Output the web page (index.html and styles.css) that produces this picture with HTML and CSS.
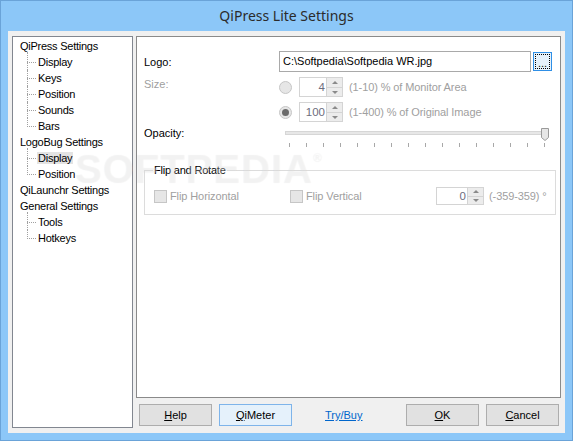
FILE: index.html
```html
<!DOCTYPE html>
<html>
<head>
<meta charset="utf-8">
<link rel="stylesheet" href="styles.css">
</head>
<body>
<div class="window">
  <div class="titlebar">QiPress Lite Settings</div>
  <div class="client">
    <div class="tree">
      <div class="node">QiPress Settings</div>
      <div class="children">
        <div class="child first"><span>Display</span></div>
        <div class="child"><span>Keys</span></div>
        <div class="child"><span>Position</span></div>
        <div class="child"><span>Sounds</span></div>
        <div class="child last"><span>Bars</span></div>
      </div>
      <div class="node">LogoBug Settings</div>
      <div class="children">
        <div class="child first sel"><span>Display</span></div>
        <div class="child last"><span>Position</span></div>
      </div>
      <div class="node">QiLaunchr Settings</div>
      <div class="node">General Settings</div>
      <div class="children">
        <div class="child first"><span>Tools</span></div>
        <div class="child last"><span>Hotkeys</span></div>
      </div>
    </div>
    <div class="right">
      <div class="panel">
        <div class="row row-logo">
          <div class="label">Logo:</div>
          <div class="field">
            <div class="textbox">C:\Softpedia\Softpedia WR.jpg</div>
            <div class="browse"><span class="focus">...</span></div>
          </div>
        </div>
        <div class="row row-size">
          <div class="label disabled">Size:</div>
          <div class="field">
            <span class="radio"></span>
            <div class="spin">
              <div class="spin-val">4</div>
              <div class="spin-btns"><span class="up"></span><span class="down"></span></div>
            </div>
            <span class="hint">(1-10) % of Monitor Area</span>
          </div>
        </div>
        <div class="row row-size">
          <div class="label"></div>
          <div class="field">
            <span class="radio checked"></span>
            <div class="spin">
              <div class="spin-val">100</div>
              <div class="spin-btns"><span class="up"></span><span class="down"></span></div>
            </div>
            <span class="hint">(1-400) % of Original Image</span>
          </div>
        </div>
        <div class="row row-opacity">
          <div class="label">Opacity:</div>
          <div class="slider">
            <div class="track"></div>
            <svg class="thumb" width="8" height="13" viewBox="0 0 8 13"><path d="M0.5 0.5 H7.5 V9.5 L4 12.5 L0.5 9.5 Z" fill="#e6e6e6" stroke="#9a9a9a"/></svg>
            <div class="ticks">
              <i></i><i></i><i></i><i></i><i></i><i></i><i></i><i></i>
              <i></i><i></i><i></i><i></i><i></i><i></i><i></i><i></i>
            </div>
          </div>
        </div>
        <fieldset class="group">
          <legend>Flip and Rotate</legend>
          <div class="group-row">
            <div class="check-item w1"><span class="checkbox"></span><span class="hint">Flip Horizontal</span></div>
            <div class="check-item w2"><span class="checkbox"></span><span class="hint">Flip Vertical</span></div>
            <div class="spin small">
              <div class="spin-val">0</div>
              <div class="spin-btns"><span class="up"></span><span class="down"></span></div>
            </div>
            <span class="hint deg">(-359-359) °</span>
          </div>
        </fieldset>
      </div>
      <div class="buttons">
        <div class="btn"><u>H</u>elp</div>
        <div class="btn hot"><u>Q</u>iMeter</div>
        <a class="link">Try/Buy</a>
        <div class="btn push"><u>O</u>K</div>
        <div class="btn"><u>C</u>ancel</div>
      </div>
    </div>
  </div>
  <div class="watermark" aria-hidden="true">SOFTPEDIA<sup>®</sup></div>
</div>
</body>
</html>
```

FILE: styles.css
```css
* { box-sizing: border-box; }
html, body { margin: 0; padding: 0; }
body {
  width: 573px;
  height: 441px;
  overflow: hidden;
  font-family: "Liberation Sans", Arial, sans-serif;
  font-size: 11px;
  color: #000;
}
.window {
  position: relative;
  width: 573px;
  height: 441px;
  background: #8cc7f8;
  border: 1px solid #6aa3d8;
  padding: 0 7px 7px 7px;
  display: flex;
  flex-direction: column;
  overflow: hidden;
}
.titlebar {
  height: 30px;
  flex: none;
  text-align: center;
  line-height: 29px;
  font-family: "Noto Sans", "Open Sans", sans-serif;
  font-size: 14px;
  color: #2b2b2b;
}
.client {
  flex: 1;
  background: #f0f0f0;
  display: flex;
  gap: 3px;
  padding: 5px 4px 5px 4px;
}
/* tree */
.tree {
  width: 121px;
  height: 392px;
  flex: none;
  background: #fff;
  border: 1px solid #828790;
  padding: 1px 0 0 7px;
  letter-spacing: -0.25px;
}
.node, .child {
  height: 16px;
  line-height: 16px;
  white-space: nowrap;
}
.child {
  position: relative;
  padding-left: 18px;
}
.child::before {
  content: "";
  position: absolute;
  left: 7px;
  top: 8px;
  width: 9px;
  border-top: 1px dotted #a0a0a0;
}
.child::after {
  content: "";
  position: absolute;
  left: 7px;
  top: 0;
  height: 16px;
  border-left: 1px dotted #a0a0a0;
}
.child.first::after { top: -2px; height: 18px; }
.child.last::after { height: 9px; }
.child.first.last::after { height: 11px; }
.child span {
  display: inline-block;
  padding: 0 1px;
  margin-left: -1px;
  line-height: 12px;
  height: 12px;
  vertical-align: top;
  margin-top: 2px;
}
.child.sel span { background: #e3e3e3; }
/* right */
.right {
  width: 425px;
  flex: none;
  display: flex;
  flex-direction: column;
  gap: 6px;
}
.panel {
  height: 362px;
  flex: none;
  background: #fff;
  border: 1px solid #8a8a8a;
  padding: 14px 6px 0 7px;
  display: flex;
  flex-direction: column;
}
.row {
  display: grid;
  grid-template-columns: 135px 1fr;
  align-items: center;
}
.row-logo { height: 21px; }
.row-size { height: 20px; margin-top: 5px; }
.label { line-height: 14px; }
.label.disabled, .hint { color: #a0a0a0; }
.row-size .label { align-self: start; margin-top: 0px; }
.field {
  display: flex;
  align-items: center;
  height: 100%;
}
.textbox {
  width: 252px;
  height: 21px;
  border: 1px solid #a9a9a9;
  padding: 0 3px;
  line-height: 19px;
  white-space: nowrap;
}
.browse {
  margin-left: 2px;
  width: 19px;
  height: 19px;
  border: 1px solid #2f8fe6;
  background: #e5f1fb;
  padding: 1px;
}
.browse .focus {
  display: block;
  width: 100%;
  height: 100%;
  border: 1px dotted #000;
  text-align: center;
  line-height: 17px;
  font-size: 11px;
  letter-spacing: 0;
}
.radio {
  width: 13px;
  height: 13px;
  border-radius: 50%;
  border: 1px solid #c6c6c6;
  background: #e6e6e6;
  flex: none;
  position: relative;
}
.radio.checked::after {
  content: "";
  position: absolute;
  left: 2px;
  top: 2px;
  width: 7px;
  height: 7px;
  border-radius: 50%;
  background: #6b6b6b;
}
.spin {
  margin-left: 7px;
  width: 44px;
  height: 20px;
  border: 1px solid #d4d4d4;
  display: flex;
  flex: none;
}
.spin-val {
  flex: 1;
  text-align: right;
  padding-right: 1px;
  line-height: 18px;
  color: #6d6d7d;
  font-size: 11.5px;
}
.spin-btns {
  width: 16px;
  display: flex;
  flex-direction: column;
  border-left: 1px solid #d4d4d4;
  background: #ececec;
}
.spin-btns span {
  flex: 1;
  position: relative;
}
.spin-btns .up { border-bottom: 1px solid #d4d4d4; }
.spin-btns span::after {
  content: "";
  position: absolute;
  left: 5px;
  width: 0;
  height: 0;
  border-left: 3px solid transparent;
  border-right: 3px solid transparent;
}
.spin-btns .up::after { top: 3px; border-bottom: 3px solid #8a8a8a; }
.spin-btns .down::after { top: 3px; border-top: 3px solid #8a8a8a; }
.hint { margin-left: 6px; white-space: nowrap; letter-spacing: -0.1px; }
.row-opacity { height: 21px; margin-top: 5px; align-items: start; }
.row-opacity .label { margin-top: -1px; }
.slider {
  position: relative;
  margin-left: 6px;
  width: 263px;
  height: 21px;
}
.track {
  margin-top: 4px;
  height: 4px;
  background: #e7e7e7;
  border: 1px solid #d6d6d6;
}
.thumb {
  position: absolute;
  left: 256px;
  top: 1px;
}
.ticks {
  margin-top: 8px;
  display: flex;
  justify-content: space-between;
  padding: 0 3px 0 4px;
}
.ticks i {
  width: 1px;
  height: 4px;
  background: #a8a8a8;
}
.group {
  margin: 16px 6px 0 0;
  border: 1px solid #dcdcdc;
  padding: 10px 8px 9px 8px;
}
.group legend {
  padding: 0 1px;
  line-height: 13px;
  letter-spacing: -0.2px;
}
.group-row {
  display: flex;
  align-items: center;
  height: 18px;
}
.check-item { display: flex; align-items: center; }
.check-item .hint { margin-left: 3px; }
.w1 { width: 136px; margin-left: 1px; }
.w2 { width: 146px; }
.checkbox {
  width: 13px;
  height: 13px;
  border: 1px solid #c6c6c6;
  background: #e6e6e6;
  flex: none;
}
.spin.small { margin-left: 0; width: 48px; height: 18px; }
.spin.small .spin-val { line-height: 16px; }
.spin.small .spin-btns .up::after, .spin.small .spin-btns .down::after { top: 2px; }
.deg { margin-left: 5px; }
/* buttons */
.buttons {
  height: 22px;
  display: flex;
  gap: 7px;
  padding: 0 2px 0 3px;
}
.btn {
  width: 73px;
  height: 22px;
  border: 1px solid #adadad;
  background: #e1e1e1;
  text-align: center;
  line-height: 20px;
}
.btn.hot { background: #e5f1fb; border-color: #7eb4ea; }
.btn u { text-decoration: underline; }
.link {
  margin-left: 26px;
  color: #0066cc;
  text-decoration: underline;
  line-height: 22px;
}
.push { margin-left: auto; }
.watermark {
  position: absolute;
  left: 74px;
  top: 146px;
  font-family: "Liberation Sans", Arial, sans-serif;
  font-weight: bold;
  font-size: 40px;
  letter-spacing: 1px;
  color: rgba(255,255,255,0.3);
  text-shadow: 0 0 1px rgba(0,0,0,0.07);
  pointer-events: none;
}
.watermark sup { font-size: 12px; vertical-align: top; position: relative; top: 4px; }
```
